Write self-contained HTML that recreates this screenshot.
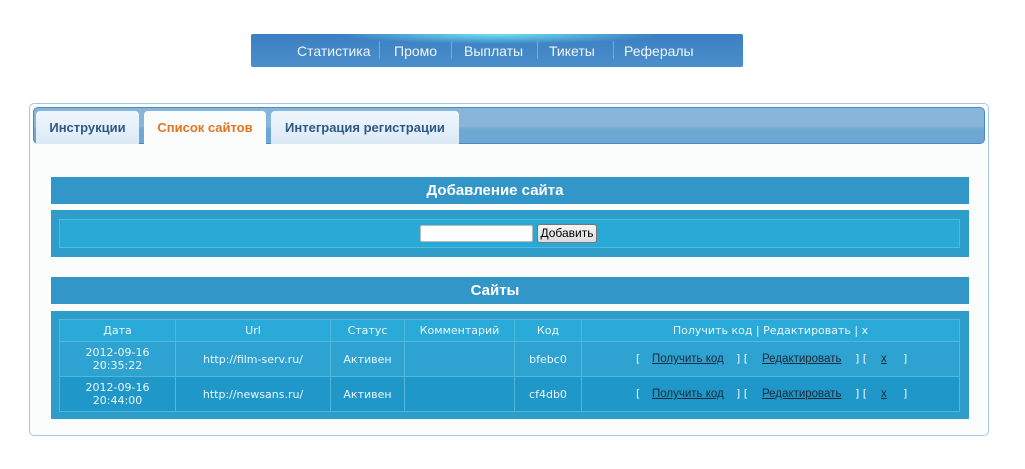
<!DOCTYPE html>
<html><head><meta charset="utf-8"><style>
*{margin:0;padding:0;box-sizing:border-box}
body{width:1025px;height:469px;background:#fff;font-family:"Liberation Sans","DejaVu Sans",sans-serif;position:relative;overflow:hidden}
.nav{position:absolute;left:251px;top:34px;width:492px;height:33px;border-radius:2px;background:radial-gradient(ellipse 160px 10px at 50% 0,#6fe3f0 0,rgba(111,227,240,0) 100%),linear-gradient(#3c7fc2,#4a8fcb);color:#eef6fc;font-size:14px}
.nav span{position:absolute;top:9px}
.nav i{position:absolute;top:7px;width:1px;height:18px;background:#6aaedf}
.box{position:absolute;left:29px;top:103px;width:960px;height:333px;border:1px solid #a9c9e2;border-radius:5px;background:#fbfdfd}
.tabbar{position:absolute;left:33px;top:107px;width:952px;height:37px;border:1px solid #4a8bc4;border-radius:5px;background:linear-gradient(#88b6db 0,#88b6db 52%,#6ea7d2 60%,#6ea7d2 100%)}
.tab{position:absolute;top:111px;height:33px;border-radius:4px 4px 0 0;background:linear-gradient(#f0f6fc,#dbe9f6);font-weight:bold;font-size:13px;color:#2c5a88;text-align:center;padding-top:9px}
.hdr{position:absolute;left:51px;width:918px;height:27px;background:#3396c9;color:#fff;font-weight:bold;font-size:15px;text-align:center;line-height:27px;padding-right:30px}
.pan{position:absolute;left:51px;width:918px;background:#2f9dc9}
.inner{position:absolute;left:8px;top:9px;width:901px;height:29px;background:#29a9d6;border:1px solid #4bbbe0}
table{position:absolute;left:8px;top:8px;width:901px;border-collapse:collapse;color:#eef6fa;font-size:11px;font-family:"DejaVu Sans",sans-serif}
td{border:1px solid #4fb8dd;text-align:center;line-height:13px}
tr.h td{background:#29aad9;height:22px}
tr.r1 td{background:#2ea2d0;height:35px}
tr.r2 td{background:#2097c9;height:35px}
.act{position:relative;height:14px}
.act span{position:absolute;top:0}
a{color:#1a2a38;text-decoration:underline;font-family:"Liberation Sans",sans-serif;font-size:11.5px}
</style></head><body>
<div class="nav">
<span style="left:46px">Статистика</span><i style="left:128px"></i>
<span style="left:143px">Промо</span><i style="left:200px"></i>
<span style="left:213px">Выплаты</span><i style="left:286px"></i>
<span style="left:298px">Тикеты</span><i style="left:362px"></i>
<span style="left:373px">Рефералы</span>
</div>
<div class="box"></div>
<div class="tabbar"></div>
<div class="tab" style="left:36px;width:103px">Инструкции</div>
<div class="tab" style="left:144px;width:122px;background:#fbfdfd;color:#e2751e">Список сайтов</div>
<div class="tab" style="left:271px;width:188px">Интеграция регистрации</div>
<div class="hdr" style="top:177px">Добавление сайта</div>
<div class="pan" style="top:210px;height:47px"><div class="inner">
<div style="position:absolute;left:360px;top:5px;width:113px;height:17px;background:#fff;border:1px solid #bbb;border-radius:2px"></div>
<div style="position:absolute;left:477px;top:4px;width:60px;height:19px;background:linear-gradient(#f4f4f4,#dcdcdc);border:1px solid #777;border-radius:3px;font-size:12px;color:#000;text-align:center;line-height:17px">Добавить</div>
</div></div>
<div class="hdr" style="top:277px">Сайты</div>
<div class="pan" style="top:311px;height:108px">
<table>
<colgroup><col style="width:116px"><col style="width:155px"><col style="width:74px"><col style="width:110px"><col style="width:67px"><col></colgroup>
<tr class="h"><td>Дата</td><td>Url</td><td>Статус</td><td>Комментарий</td><td>Код</td><td>Получить код | Редактировать | x</td></tr>
<tr class="r1"><td>2012-09-16<br>20:35:22</td><td>http://film-serv.ru/</td><td>Активен</td><td></td><td>bfebc0</td><td><div class="act"><span style="left:54px">[</span><span style="left:70px"><a>Получить код</a></span><span style="left:154px">] [</span><span style="left:180px"><a>Редактировать</a></span><span style="left:273px">] [</span><span style="left:299px"><a>x</a></span><span style="left:321px">]</span></div></td></tr>
<tr class="r2"><td>2012-09-16<br>20:44:00</td><td>http://newsans.ru/</td><td>Активен</td><td></td><td>cf4db0</td><td><div class="act"><span style="left:54px">[</span><span style="left:70px"><a>Получить код</a></span><span style="left:154px">] [</span><span style="left:180px"><a>Редактировать</a></span><span style="left:273px">] [</span><span style="left:299px"><a>x</a></span><span style="left:321px">]</span></div></td></tr>
</table>
</div>
</body></html>
